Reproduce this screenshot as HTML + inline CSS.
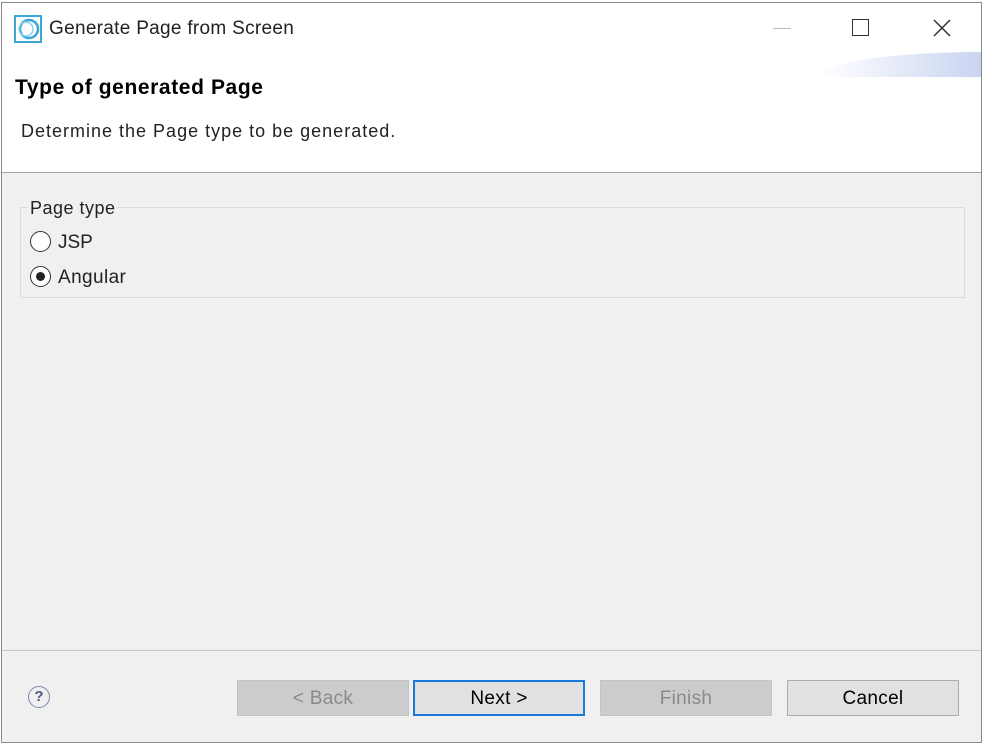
<!DOCTYPE html>
<html><head><style>
*{margin:0;padding:0;box-sizing:border-box}
body{width:984px;height:745px;background:#fff;position:relative;overflow:hidden;font-family:"Liberation Sans",sans-serif;}
.a{position:absolute}
.btn{position:absolute;top:680px;height:36px;width:172px;font-size:19px;text-align:center;line-height:36px;letter-spacing:0.3px}
</style></head><body>
<div class="a" style="left:1px;top:2px;width:981px;height:741px;border:1px solid #8a8a8a;background:#f0f0f0"></div>
<div class="a" style="left:2px;top:3px;width:979px;height:170px;background:#fff;border-bottom:1px solid #a0a0a0"></div>
<div class="a" style="left:820px;top:52px;width:161px;height:25px;background:linear-gradient(to right,rgba(220,228,245,0),#c9d4f0);border-top-left-radius:160px 25px"></div>
<svg class="a" style="left:14px;top:15px" width="28" height="28" viewBox="0 0 28 28"><rect x="1" y="1" width="26" height="26" fill="none" stroke="#3aa6d8" stroke-width="2"/><circle cx="15" cy="14" r="9" fill="none" stroke="#3aa6d8" stroke-width="2.5"/><circle cx="12" cy="14" r="7" fill="none" stroke="#8fd0ef" stroke-width="1.5"/></svg>
<div class="a" style="left:49px;top:18px;font-size:19px;color:#222;letter-spacing:0.3px">Generate Page from Screen</div>
<div class="a" style="left:773px;top:28px;width:18px;height:1px;background:#bbb"></div>
<div class="a" style="left:852px;top:19px;width:17px;height:17px;border:1.5px solid #333"></div>
<svg class="a" style="left:933px;top:19px" width="18" height="18"><path d="M1 1L17 17M17 1L1 17" stroke="#333" stroke-width="1.5"/></svg>
<div class="a" style="left:15px;top:76px;font-size:21px;font-weight:bold;color:#000;letter-spacing:0.6px">Type of generated Page</div>
<div class="a" style="left:21px;top:121px;font-size:18px;color:#222;letter-spacing:1px">Determine the Page type to be generated.</div>
<div class="a" style="left:20px;top:207px;width:945px;height:91px;border:1px solid #dcdcdc"></div>
<div class="a" style="left:28px;top:198px;font-size:18px;color:#222;background:#f0f0f0;padding:0 2px;letter-spacing:0.5px">Page type</div>
<div class="a" style="left:30px;top:231px;width:21px;height:21px;border:1.5px solid #333;border-radius:50%;background:#fff"></div>
<div class="a" style="left:58px;top:232px;font-size:19px;color:#222">JSP</div>
<div class="a" style="left:30px;top:266px;width:21px;height:21px;border:1.5px solid #333;border-radius:50%;background:#fff"></div>
<div class="a" style="left:36px;top:272px;width:9px;height:9px;border-radius:50%;background:#222"></div>
<div class="a" style="left:58px;top:267px;font-size:19px;color:#222;letter-spacing:0.4px">Angular</div>
<div class="a" style="left:2px;top:650px;width:979px;height:1px;background:#c8c8c8"></div>
<div class="a" style="left:28px;top:686px;width:22px;height:22px;border:1.5px solid #7a8aa8;border-radius:50%;font-size:15px;text-align:center;line-height:19px;color:#4a5a80;font-weight:bold">?</div>
<div class="btn" style="left:237px;background:#cccccc;border:1px solid #c4c4c4;color:#8a8a8a">&lt; Back</div>
<div class="btn" style="left:413px;background:#e1e1e1;border:2px solid #1a7ad8;color:#000;line-height:34px">Next &gt;</div>
<div class="btn" style="left:600px;background:#cccccc;border:1px solid #c4c4c4;color:#8a8a8a">Finish</div>
<div class="btn" style="left:787px;background:#e1e1e1;border:1px solid #adadad;color:#000">Cancel</div>
</body></html>
